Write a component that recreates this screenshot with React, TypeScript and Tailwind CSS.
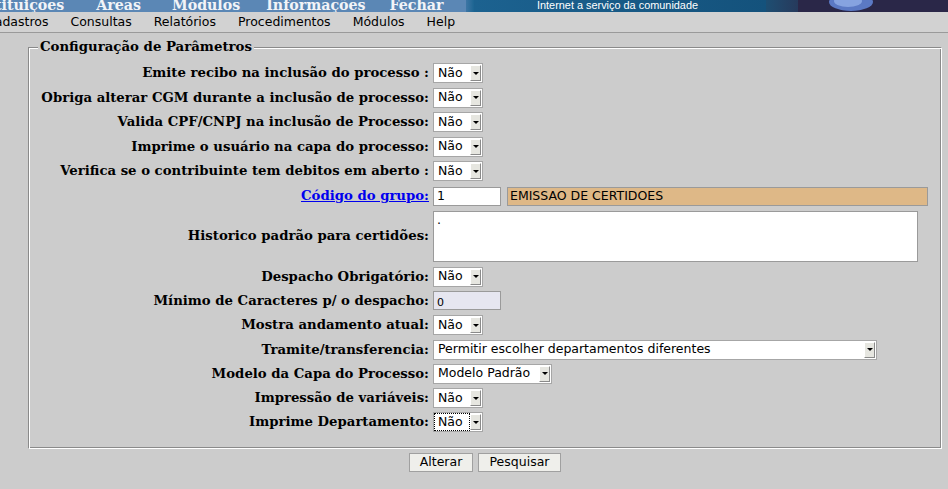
import React from "react";

const SERIF = "font-['DejaVu_Serif',serif]";
const SANS = "font-['DejaVu_Sans',sans-serif]";

function Arrow() {
  return (
    <div className="mr-[1px] flex h-[16px] w-[11px] items-center justify-center border-t border-l border-b border-r border-t-white border-l-white border-b-[#8a8a8a] border-r-[#8a8a8a] bg-[#e6e6e0]">
      <div className="h-0 w-0 border-l-[3px] border-r-[3px] border-t-[3px] border-l-transparent border-r-transparent border-t-black" />
    </div>
  );
}

function Sel({ text, w, focus }: { text: string; w: string; focus?: boolean }) {
  return (
    <div className={`flex h-[20px] items-center border border-[#a6a6a6] bg-white ${w}`}>
      {focus ? (
        <span className={`flex h-[18px] flex-1 items-center border border-dotted border-black pl-[3px] text-[12.5px] text-black ${SANS}`}>
          {text}
        </span>
      ) : (
        <span className={`flex-1 pl-[4px] text-[12.5px] text-black ${SANS}`}>{text}</span>
      )}
      <Arrow />
    </div>
  );
}

function Row({
  label,
  children,
  h = "h-[24.5px]",
  link,
}: {
  label: string;
  children: React.ReactNode;
  h?: string;
  link?: boolean;
}) {
  return (
    <div className={`flex items-center ${h}`}>
      <div className={`w-[401px] whitespace-nowrap pr-[1px] text-right text-[13.25px] font-bold ${SERIF}`}>
        {link ? <span className="text-[#0000ee] underline">{label}</span> : <span className="text-black">{label}</span>}
      </div>
      <div className="ml-[3px] flex items-center">{children}</div>
    </div>
  );
}

export default function App() {
  return (
    <div className="min-h-screen w-[948px] overflow-hidden bg-[#cccccc]">
      {/* header banner */}
      <div className="flex h-[12px] overflow-hidden">
        <div className={`flex w-[466px] shrink-0 items-end gap-[29px] bg-[#5b87b5] leading-none text-[#f2f4f8] ${SERIF} text-[14.2px] font-bold`}>
          <span className="ml-[-30px]">Instituições</span>
          <span className="ml-[3px]">Áreas</span>
          <span className="ml-[2px]">Módulos</span>
          <span className="ml-[-3px]">Informações</span>
          <span className="ml-[-5px]">Fechar</span>
        </div>
        <div className="w-[8px] shrink-0 bg-gradient-to-r from-[#3d76a5] to-[#1c6592]" />
        <div className="flex w-[292px] shrink-0 items-center bg-gradient-to-r from-[#1c6290] to-[#14527c]">
          <span className="ml-[63px] mt-[-1px] font-['Liberation_Sans',sans-serif] text-[10.9px] leading-none text-white">
            Internet a serviço da comunidade
          </span>
        </div>
        <div className="w-[32px] shrink-0 bg-gradient-to-r from-[#1d4e72] to-[#263a5c]" />
        <div className="relative flex-1 bg-[#2a2748]">
          <svg className="absolute left-[28px] top-0" width="50" height="12" viewBox="0 0 50 12">
            <ellipse cx="25" cy="2" rx="22" ry="9" fill="#5b79c4" />
            <ellipse cx="22" cy="1" rx="14" ry="6" fill="#86a3e0" />
          </svg>
        </div>
      </div>

      {/* menu */}
      <div className={`flex h-[21px] items-center gap-[22px] border-b border-[#9a9a9a] bg-[#d2d2d2] text-[12.5px] text-black ${SANS}`}>
        <span className="ml-[-14px]">Cadastros</span>
        <span>Consultas</span>
        <span>Relatórios</span>
        <span>Procedimentos</span>
        <span>Módulos</span>
        <span>Help</span>
      </div>

      {/* form */}
      <div className="ml-[28px] mt-[6px] w-[914px]">
        <fieldset className="m-0 border border-t-[#8a8a8a] border-l-[#8a8a8a] border-b-white border-r-white p-0 pt-[6px] pb-[13px] shadow-[inset_1px_1px_0_#ffffff,inset_-1px_-1px_0_#8a8a8a]">
          <legend className={`ml-[9px] bg-[#cccccc] px-[2px] text-[13.3px] font-bold leading-[16px] text-black ${SERIF}`}>
            Configuração de Parâmetros
          </legend>
          <div className="flex flex-col">
            <Row label="Emite recibo na inclusão do processo :">
              <Sel text="Não" w="w-[50px]" />
            </Row>
            <Row label="Obriga alterar CGM durante a inclusão de processo:">
              <Sel text="Não" w="w-[50px]" />
            </Row>
            <Row label="Valida CPF/CNPJ na inclusão de Processo:">
              <Sel text="Não" w="w-[50px]" />
            </Row>
            <Row label="Imprime o usuário na capa do processo:">
              <Sel text="Não" w="w-[50px]" />
            </Row>
            <Row label="Verifica se o contribuinte tem debitos em aberto :">
              <Sel text="Não" w="w-[50px]" />
            </Row>
            <Row label="Código do grupo:" link>
              <div className={`mt-[1px] flex h-[19px] w-[68px] items-center border border-[#9a9a9a] bg-white pl-[3px] text-[12.5px] text-black ${SANS}`}>
                1
              </div>
              <div className={`mt-[1px] ml-[6px] flex h-[19px] w-[421px] items-center border border-[#9a9a9a] bg-[#deb887] pl-[2px] text-[12.5px] text-black ${SANS}`}>
                EMISSAO DE CERTIDOES
              </div>
            </Row>
            <Row label="Historico padrão para certidões:" h="h-[56.5px]">
              <div className={`h-[51px] w-[485px] border border-[#9a9a9a] bg-white pl-[3px] pt-[1px] text-[12.5px] leading-[14px] text-black ${SANS}`}>
                .
              </div>
            </Row>
            <Row label="Despacho Obrigatório:" h="h-[24.3px]">
              <Sel text="Não" w="w-[50px]" />
            </Row>
            <Row label="Mínimo de Caracteres p/ o despacho:" h="h-[24.3px]">
              <div className={`flex h-[19px] w-[68px] items-end border border-[#9a9a9a] bg-[#e6e6f0] pb-[1px] pl-[3px] text-[11px] leading-none text-black ${SANS}`}>
                0
              </div>
            </Row>
            <Row label="Mostra andamento atual:" h="h-[24.3px]">
              <Sel text="Não" w="w-[50px]" />
            </Row>
            <Row label="Tramite/transferencia:" h="h-[24.3px]">
              <Sel text="Permitir escolher departamentos diferentes" w="w-[444px]" />
            </Row>
            <Row label="Modelo da Capa do Processo:" h="h-[24.3px]">
              <Sel text="Modelo Padrão" w="w-[119px]" />
            </Row>
            <Row label="Impressão de variáveis:" h="h-[24.3px]">
              <Sel text="Não" w="w-[50px]" />
            </Row>
            <Row label="Imprime Departamento:" h="h-[24.3px]">
              <Sel text="Não" w="w-[50px]" focus />
            </Row>
          </div>
        </fieldset>
        <div className={`mt-[4px] flex justify-center gap-[5px] text-[12.5px] text-black ${SANS}`}>
          <button className="flex h-[19px] w-[64px] items-center justify-center border border-[#a0a0a0] bg-[#efefeb]">
            Alterar
          </button>
          <button className="flex h-[19px] w-[83px] items-center justify-center border border-[#a0a0a0] bg-[#efefeb]">
            Pesquisar
          </button>
        </div>
      </div>
    </div>
  );
}
